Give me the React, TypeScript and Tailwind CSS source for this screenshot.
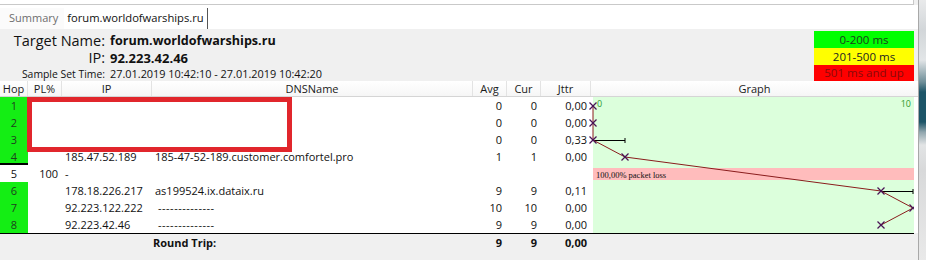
import React from "react";

type Row = {
  hop: number;
  pl: string;
  ip: string;
  dns: string;
  avg: string;
  cur: string;
  j: string;
  green: boolean;
  dash?: boolean;
  mark?: boolean;
};

const rows: Row[] = [
  { hop: 1, pl: "", ip: "", dns: "", avg: "0", cur: "0", j: "0,00", green: true },
  { hop: 2, pl: "", ip: "", dns: "", avg: "0", cur: "0", j: "0,00", green: true },
  { hop: 3, pl: "", ip: "", dns: "", avg: "0", cur: "0", j: "0,33", green: true },
  { hop: 4, pl: "", ip: "185.47.52.189", dns: "185-47-52-189.customer.comfortel.pro", avg: "1", cur: "1", j: "0,00", green: true, mark: true },
  { hop: 5, pl: "100", ip: "-", dns: "", avg: "", cur: "", j: "", green: false },
  { hop: 6, pl: "", ip: "178.18.226.217", dns: "as199524.ix.dataix.ru", avg: "9", cur: "9", j: "0,11", green: true },
  { hop: 7, pl: "", ip: "92.223.122.222", dns: "--------------", avg: "10", cur: "10", j: "0,00", green: true, dash: true },
  { hop: 8, pl: "", ip: "92.223.42.46", dns: "--------------", avg: "9", cur: "9", j: "0,00", green: true, dash: true },
];

function Mark({ x, y }: { x: number; y: number }) {
  return (
    <g stroke="#4a1456" strokeWidth={1.2}>
      <line x1={x - 3.5} y1={y - 3.5} x2={x + 3.5} y2={y + 3.5} />
      <line x1={x - 3.5} y1={y + 3.5} x2={x + 3.5} y2={y - 3.5} />
    </g>
  );
}

function Graph() {
  const ys = [9, 26, 43, 60, 77, 94, 111, 128];
  const pts: [number, number][] = [
    [0, ys[0]],
    [0, ys[1]],
    [0, ys[2]],
    [32, ys[3]],
    [288, ys[5]],
    [320, ys[6]],
    [288, ys[7]],
  ];
  return (
    <svg width={325} height={136} viewBox="-4 0 325 136" className="block -ml-[4px]">
      <rect x={0} y={0} width={321} height={136} fill="#dcffdc" />
      <rect x={0} y={71} width={321} height={12} fill="#ffbcbc" />
      <text x={3} y={80.5} fontFamily="'Liberation Serif', serif" fontSize={8.5} fill="#111">
        100,00% packet loss
      </text>
      <text x={4} y={10} fontFamily="'Open Sans', sans-serif" fontSize={9} fill="#2f9a2f">
        0
      </text>
      <text x={318} y={10} textAnchor="end" fontFamily="'Open Sans', sans-serif" fontSize={9} fill="#2f9a2f">
        10
      </text>
      <g stroke="#000" strokeWidth={1}>
        <line x1={0} y1={ys[2] + 0.5} x2={32} y2={ys[2] + 0.5} />
        <line x1={32} y1={ys[2] - 2} x2={32} y2={ys[2] + 3} />
        <line x1={288} y1={ys[5] + 0.5} x2={320} y2={ys[5] + 0.5} />
        <line x1={320} y1={ys[5] - 2} x2={320} y2={ys[5] + 3} />
      </g>
      <polyline
        points={pts.map((p) => p.join(",")).join(" ")}
        fill="none"
        stroke="#8a1c1c"
        strokeWidth={1}
      />
      {pts.map((p, i) => (
        <Mark key={i} x={p[0]} y={p[1]} />
      ))}
    </svg>
  );
}

export default function App() {
  return (
    <div className="w-[926px] h-[260px] overflow-hidden flex bg-[#f0f0f0] font-['Open_Sans',sans-serif] text-[#111]">
      <div className="w-[919px] flex flex-col border-r border-[#a8a8a8] bg-[#f0f0f0]">
        <div className="h-[5px] w-[914px] bg-white border-b border-r border-[#c9c9c9]" />
        <div className="h-[24px] bg-white flex items-end">
          <div className="h-[21px] flex items-center pl-[9px] pr-[6px] text-[11px] text-[#6e6e6e] bg-[#fbfbfb]">
            Summary
          </div>
          <div className="h-[21px] flex items-center pl-[3px] pr-[3px] text-[11.2px] text-[#111] border-r border-[#555]">
            forum.worldofwarships.ru
          </div>
        </div>
        <div className="h-[52px] flex justify-between">
          <div className="pt-[3px] grid grid-cols-[105px_auto] gap-x-[5px] items-center">
            <div className="h-[18px] leading-[18px] text-right text-[14.5px] text-[#111]">Target Name:</div>
            <div className="h-[18px] leading-[18px] font-bold text-[12.6px] text-[#111]">forum.worldofwarships.ru</div>
            <div className="h-[16px] leading-[16px] text-right text-[14.5px] text-[#111]">IP:</div>
            <div className="h-[16px] leading-[16px] font-bold text-[13px] text-[#111]">92.223.42.46</div>
            <div className="h-[14px] leading-[14px] text-right text-[10.4px] text-[#111] whitespace-nowrap">Sample Set Time:</div>
            <div className="h-[14px] leading-[14px] text-[10.9px] text-[#111] whitespace-nowrap">27.01.2019 10:42:10 - 27.01.2019 10:42:20</div>
          </div>
          <div className="mt-[2px] mr-[4px] w-[100px] flex flex-col text-[11.5px]">
            <div className="h-[17px] bg-[#00ff00] flex items-center justify-center text-[#1c3a1c]">0-200 ms</div>
            <div className="h-[17px] bg-[#ffff00] flex items-center justify-center text-[#222]">201-500 ms</div>
            <div className="h-[16px] bg-[#ff0000] flex items-center justify-center text-[#8a0a0a]">501 ms and up</div>
          </div>
        </div>
        <div className="h-[16px] flex text-[11px] text-[#1a1a1a] bg-[linear-gradient(to_bottom,#ffffff,#f6f6f6)] border-b border-[#d5d5d5] leading-[15px]">
          <div className="w-[28px] text-center border-r border-[#e3e3e3]">Hop</div>
          <div className="w-[34px] text-center border-r border-[#e3e3e3]">PL%</div>
          <div className="w-[90px] text-center border-r border-[#e3e3e3]">IP</div>
          <div className="w-[321px] text-center border-r border-[#e3e3e3]">DNSName</div>
          <div className="w-[34px] text-center border-r border-[#e3e3e3]">Avg</div>
          <div className="w-[34px] text-center border-r border-[#e3e3e3]">Cur</div>
          <div className="w-[50px] text-center border-r border-[#e3e3e3]">Jttr</div>
          <div className="flex-1 text-center">Graph</div>
        </div>
        <div className="relative flex bg-white">
          <div className="w-[591px] flex flex-col">
            {rows.map((r) => (
              <div key={r.hop} className="h-[17px] flex text-[11px] leading-[17px] text-[#111]">
                <div
                  className={
                    "w-[28px] text-center " +
                    (r.green ? "bg-[#14ee14] text-[#1f3f1f] " : "bg-white ") +
                    (r.mark ? "shadow-[inset_0_-2px_0_#000]" : "")
                  }
                >
                  {r.hop}
                </div>
                <div className="w-[34px] text-right pr-[4px]">{r.pl}</div>
                <div className="w-[90px] pl-[3px] whitespace-nowrap">{r.ip}</div>
                <div className={"w-[321px] whitespace-nowrap " + (r.dash ? "pl-[6px] tracking-[0.5px]" : "pl-[3px]")}>
                  {r.dns}
                </div>
                <div className="w-[34px] text-right pr-[5px]">{r.avg}</div>
                <div className="w-[34px] text-right pr-[4px]">{r.cur}</div>
                <div className="w-[50px] text-right pr-[4px]">{r.j}</div>
              </div>
            ))}
          </div>
          <div className="w-[327px] pl-[2px]">
            <Graph />
          </div>
          <div className="absolute left-[27px] top-0 w-[265px] h-[55px] border-[5px] border-[#e1262c]" />
        </div>
        <div className="w-[914px] h-[19px] flex border-t border-black text-[11px] font-bold leading-[18px] text-[#111]">
          <div className="w-[152px]" />
          <div className="w-[321px] pl-[1px]">Round Trip:</div>
          <div className="w-[34px] text-right pr-[5px]">9</div>
          <div className="w-[34px] text-right pr-[4px]">9</div>
          <div className="w-[50px] text-right pr-[4px]">0,00</div>
        </div>
      </div>
      <div className="flex-1 bg-[linear-gradient(to_bottom,#e9eaeb_0px,#d2d6d9_30px,#e2e5e7_60px,#6f8f99_82px,#1d5568_92px,#1d5568_122px,#8fa5ad_132px,#e2e4e5_145px,#d8d9da_170px,#e9e9e9_100%)]" />
    </div>
  );
}
